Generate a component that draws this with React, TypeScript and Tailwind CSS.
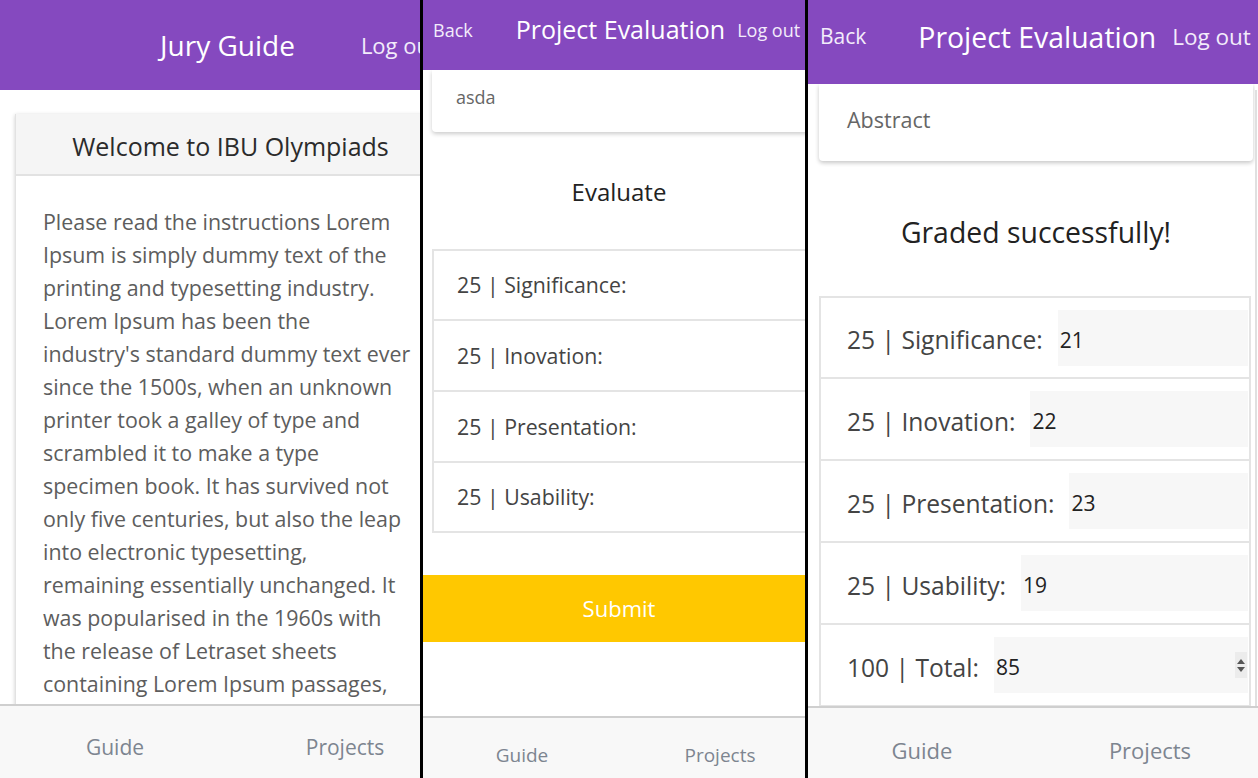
const guideLines = [
  "Please read the instructions Lorem",
  "Ipsum is simply dummy text of the",
  "printing and typesetting industry.",
  "Lorem Ipsum has been the",
  "industry's standard dummy text ever",
  "since the 1500s, when an unknown",
  "printer took a galley of type and",
  "scrambled it to make a type",
  "specimen book. It has survived not",
  "only five centuries, but also the leap",
  "into electronic typesetting,",
  "remaining essentially unchanged. It",
  "was popularised in the 1960s with",
  "the release of Letraset sheets",
  "containing Lorem Ipsum passages,",
];

const criteria = [
  { name: "Significance", h: "h-[68px]" },
  { name: "Inovation", h: "h-[71px] border-t-2 border-[#e4e4e4]" },
  { name: "Presentation", h: "h-[71px] border-t-2 border-[#e4e4e4]" },
  { name: "Usability", h: "h-[70px] border-t-2 border-[#e4e4e4]" },
];

const grades = [
  { label: "25 | Significance:", value: "21" },
  { label: "25 | Inovation:", value: "22" },
  { label: "25 | Presentation:", value: "23" },
  { label: "25 | Usability:", value: "19" },
  { label: "100 | Total:", value: "85", spinner: true },
];

const font = { fontFamily: '"Open Sans", "Noto Sans", sans-serif' };

function Footer({ width, height, size, pad }: { width: string; height: string; size: string; pad: string }) {
  return (
    <div className={`flex shrink-0 border-t-2 border-[#cfcfcf] bg-[#f8f8f8] text-[#7d8590] ${height} ${pad}`}>
      <div className={`flex shrink-0 ${width}`}>
        <div className={`flex flex-1 items-center justify-center ${size}`}>Guide</div>
        <div className={`flex flex-1 items-center justify-center ${size}`}>Projects</div>
      </div>
    </div>
  );
}

function GuidePanel() {
  return (
    <div className="flex h-full w-[420px] shrink-0 flex-col overflow-hidden bg-white">
      <div className="flex h-[90px] shrink-0 items-center bg-[#8549bf] text-white">
        <div className="flex w-[460px] shrink-0 items-center">
          <span className="ml-[160px] text-[28px]">Jury Guide</span>
          <span className="ml-[66px] text-[22px] text-[#f3ecfb]">Log out</span>
        </div>
      </div>
      <div className="min-h-0 flex-1 overflow-hidden">
        <div className="ml-[15px] mt-[24px] w-[430px] border-l border-[#e2e2e2] bg-white shadow-[0_1px_4px_rgba(0,0,0,0.2)]">
          <div className="flex h-[62px] items-center justify-center border-b-2 border-[#e2e2e2] bg-[#f5f5f5] pt-[6px] text-[25px] text-[#2b2b2b]">
            Welcome to IBU Olympiads
          </div>
          <div className="pb-6 pl-[27px] pt-[29px] text-[21.4px] leading-[33px] text-[#5d5d5d]">
            {guideLines.map((line) => (
              <p key={line} className="whitespace-nowrap">
                {line}
              </p>
            ))}
          </div>
        </div>
      </div>
      <Footer width="w-[460px]" height="h-[74px]" size="text-[21px]" pad="pt-[12px]" />
    </div>
  );
}

function EvaluatePanel() {
  return (
    <div className="flex h-full w-[382px] shrink-0 flex-col overflow-hidden bg-white">
      <div className="relative z-10 flex h-[70px] shrink-0 items-center bg-[#8549bf] pb-[10px] text-white">
        <div className="flex w-[400px] shrink-0 items-center">
          <span className="ml-[10px] text-[18px] text-[#f3ecfb]">Back</span>
          <span className="ml-[43px] text-[25px]">Project Evaluation</span>
          <span className="ml-[12px] text-[18px] text-[#f3ecfb]">Log out</span>
        </div>
      </div>
      <div className="min-h-0 flex-1 overflow-hidden">
        <div className="w-[400px]">
          <div className="ml-[9px] flex h-[62px] items-center rounded-b bg-white pb-[8px] pl-[24px] text-[18px] text-[#666] shadow-[0_2px_4px_rgba(0,0,0,0.2)]">
            asda
          </div>
          <div className="mt-[44px] w-[392px] text-center text-[24px] leading-[32px] text-[#222]">Evaluate</div>
          <div className="ml-[9px] mt-[41px] border-2 border-[#e4e4e4]">
            {criteria.map((c) => (
              <div key={c.name} className={`flex items-center pl-[23px] text-[21.3px] text-[#444] ${c.h}`}>
                25 | {c.name}:
              </div>
            ))}
          </div>
          <div className="mt-[42px] flex h-[67px] items-center bg-[#ffc800] text-[22px] text-white">
            <span className="w-[392px] text-center">Submit</span>
          </div>
        </div>
      </div>
      <Footer width="w-[396px]" height="h-[62px]" size="text-[19px]" pad="pt-[14px]" />
    </div>
  );
}

function GradedPanel() {
  return (
    <div className="flex h-full w-[450px] shrink-0 flex-col overflow-hidden bg-white">
      <div className="relative z-10 flex h-[84px] shrink-0 items-center bg-[#8549bf] pb-[10px] text-white">
        <span className="ml-[12px] text-[21px] text-[#f3ecfb]">Back</span>
        <span className="ml-[52px] text-[28.4px]">Project Evaluation</span>
        <span className="ml-[16px] text-[22.5px] text-[#f3ecfb]">Log out</span>
      </div>
      <div className="flex min-h-0 flex-1">
        <div className="min-w-0 flex-1 overflow-hidden">
          <div className="ml-[11px] flex h-[77px] w-[434px] items-center rounded-b bg-white pb-[4px] pl-[28px] text-[21.5px] text-[#666] shadow-[0_2px_4px_rgba(0,0,0,0.22)]">
            Abstract
          </div>
          <div className="mt-[52px] w-[456px] text-center text-[28.4px] leading-[38px] text-[#222]">
            Graded successfully!
          </div>
          <div className="ml-[11px] mt-[45px] w-[432px] border-2 border-[#e4e4e4]">
            {grades.map((g, i) => (
              <div
                key={g.label}
                className={`flex items-center pl-[26px] pr-[1px] ${i > 0 ? "h-[82px] border-t-2 border-[#e4e4e4]" : "h-[79px]"}`}
              >
                <span className="whitespace-nowrap pt-[6px] text-[24.6px] text-[#444]">{g.label}</span>
                <div className="ml-[15px] flex h-[56px] flex-1 items-center bg-[#f7f7f7] pl-[2px] text-[21px] text-[#222]">
                  <span className="flex-1 pt-[6px]">{g.value}</span>
                  {g.spinner && (
                    <div className="mr-[1px] flex h-[26px] w-[12px] flex-col items-center justify-center gap-[3px] bg-[#ececec]">
                      <span className="h-0 w-0 border-x-[4px] border-b-[5px] border-x-transparent border-b-[#555]" />
                      <span className="h-0 w-0 border-x-[4px] border-t-[5px] border-x-transparent border-t-[#555]" />
                    </div>
                  )}
                </div>
              </div>
            ))}
          </div>
        </div>
        <div className="mt-[6px] w-[2px] shrink-0 bg-[#e0e0e0]" />
        <div className="w-[1px] shrink-0 bg-white" />
      </div>
      <Footer width="w-[456px]" height="h-[72px]" size="text-[22px]" pad="pt-[14px]" />
    </div>
  );
}

export default function App() {
  return (
    <div className="flex h-[778px] w-[1258px] overflow-hidden bg-black" style={font}>
      <GuidePanel />
      <div className="w-[3px] shrink-0 bg-black" />
      <EvaluatePanel />
      <div className="w-[3px] shrink-0 bg-black" />
      <GradedPanel />
    </div>
  );
}
